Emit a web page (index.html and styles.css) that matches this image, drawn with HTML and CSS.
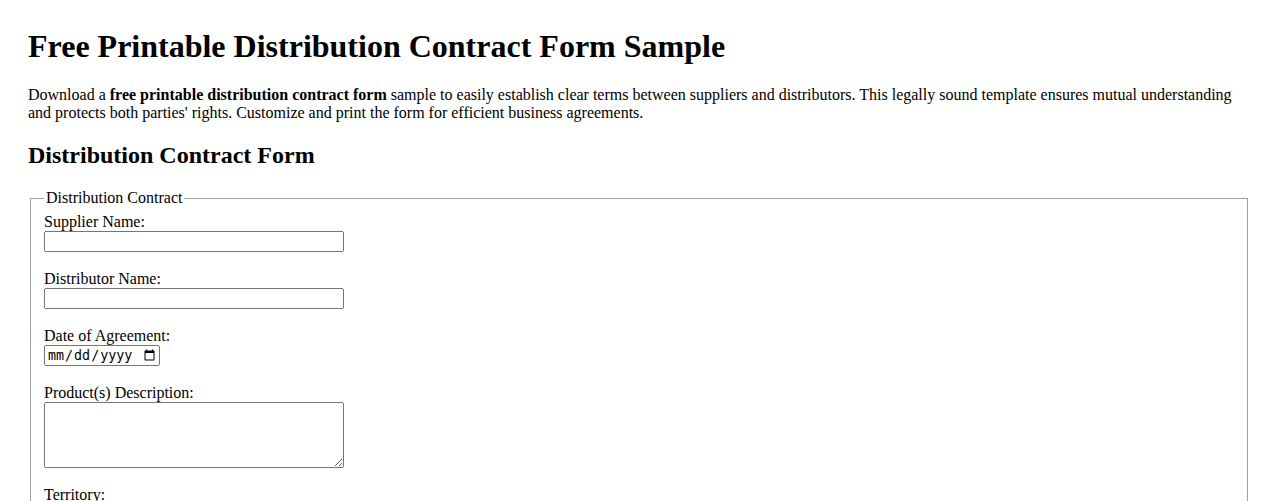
FILE: index.html
```html
<!DOCTYPE html>
<html lang="en">
<head>
<meta charset="utf-8">
<title>Free Printable Distribution Contract Form Sample</title>
<link rel="stylesheet" href="styles.css">
</head>
<body>
<main class="page">
  <h1 class="title">Free Printable Distribution Contract Form Sample</h1>
  <p class="intro">Download a <strong>free printable distribution contract form</strong> sample to easily establish clear terms between suppliers and distributors. This legally sound template ensures mutual understanding and protects both parties' rights. Customize and print the form for efficient business agreements.</p>
  <h2 class="subtitle">Distribution Contract Form</h2>
  <form class="form">
    <fieldset class="group">
      <legend class="legend">Distribution Contract</legend>
      <div class="field">
        <label class="label" for="supplier">Supplier Name:</label>
        <input class="text" type="text" id="supplier" name="supplier">
      </div>
      <div class="field">
        <label class="label" for="distributor">Distributor Name:</label>
        <input class="text" type="text" id="distributor" name="distributor">
      </div>
      <div class="field">
        <label class="label" for="date">Date of Agreement:</label>
        <input class="date" type="date" id="date" name="date">
      </div>
      <div class="field">
        <label class="label" for="products">Product(s) Description:</label>
        <textarea class="area" id="products" name="products" rows="4"></textarea>
      </div>
      <div class="field">
        <label class="label" for="territory">Territory:</label>
        <input class="text" type="text" id="territory" name="territory">
      </div>
    </fieldset>
  </form>
</main>
</body>
</html>
```

FILE: styles.css
```css
html, body {
  margin: 0;
  padding: 0;
  background: #ffffff;
}

body {
  font-family: "Liberation Serif", "Times New Roman", serif;
  font-size: 16px;
  color: #000000;
}

.page {
  padding: 28px 28px;
}

.title {
  font-size: 32px;
  font-weight: bold;
  margin: 0 0 21px;
}

.intro {
  margin: 0 0 20px;
}

.subtitle {
  font-size: 24px;
  font-weight: bold;
  margin: 0 0 20px;
}

.form {
  margin: 0;
}

.group {
  margin: 0 2px;
  padding: 6px 13px 10px;
  border: 1px solid #a0a0a0;
}

.legend {
  padding: 0 2px;
}

.field {
  display: flex;
  flex-direction: column;
  align-items: flex-start;
  margin-bottom: 18px;
}

.label {
  display: block;
}

.text {
  width: 300px;
  height: 21px;
  box-sizing: border-box;
  margin: 0;
}

.date {
  width: 116px;
  height: 21px;
  box-sizing: border-box;
  margin: 0;
}

.area {
  width: 300px;
  height: 66px;
  box-sizing: border-box;
  margin: 0;
}
```
